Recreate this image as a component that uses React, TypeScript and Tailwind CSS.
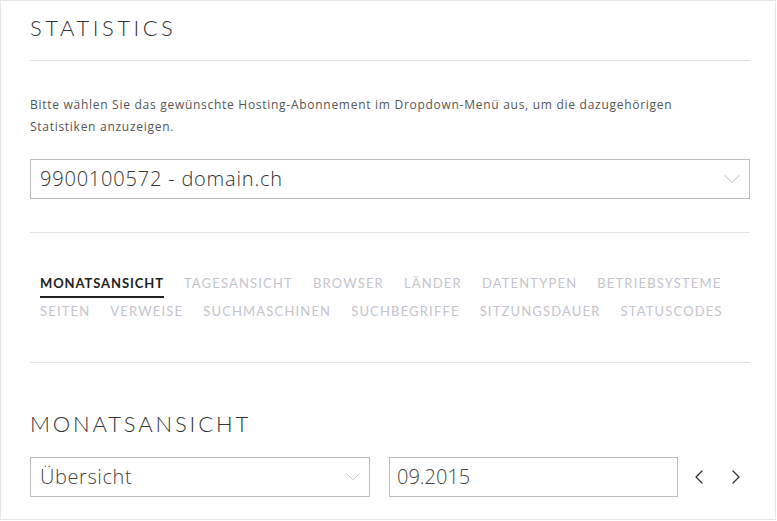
import { ChevronDown, ChevronLeft, ChevronRight } from "lucide-react";

const tabsRow1 = ["Monatsansicht", "Tagesansicht", "Browser", "Länder", "Datentypen", "Betriebsysteme"];
const tabsRow2 = ["Seiten", "Verweise", "Suchmaschinen", "Suchbegriffe", "Sitzungsdauer", "Statuscodes"];

const Tab = ({ label, active }: { label: string; active?: boolean }) => (
  <span
    className={
      active
        ? "border-b-2 border-[#222] pb-[4px] font-bold tracking-[0.07em] text-[#222]"
        : "pb-[6px] text-[#c4c4cc]"
    }
  >
    {label}
  </span>
);

const App = () => {
  return (
    <div
      className="h-[520px] w-[776px] overflow-hidden border border-[#e6e6e6] bg-white pl-[29px] pr-[25px] text-[#444]"
      style={{ fontFamily: "Lato, 'Open Sans', sans-serif" }}
    >
      <h1 className="mt-[13px] text-[22px] font-light uppercase leading-[28px] tracking-[0.16em] text-[#333]">
        Statistics
      </h1>
      <div className="mt-[18px] border-t border-[#e3e3e3]" />

      <p className="mt-[33px] font-['Open_Sans',sans-serif] text-[12px] leading-[22px] tracking-[0.06em] text-[#555]">
        Bitte wählen Sie das gewünschte Hosting-Abonnement im Dropdown-Menü aus, um die dazugehörigen
        <br />
        Statistiken anzuzeigen.
      </p>

      <div className="mt-[21px] flex h-[40px] items-center justify-between border border-[#bdbdbd] pl-[9px] pr-[3px]">
        <span className="font-['Open_Sans',sans-serif] text-[20px] font-light tracking-[0.04em] text-[#333]">
          9900100572 - domain.ch
        </span>
        <ChevronDown className="h-7 w-7 text-[#c8c8c8]" strokeWidth={0.9} />
      </div>

      <div className="mt-[33px] border-t border-[#e3e3e3]" />

      <div className="mt-[41px] flex flex-col gap-[4px] px-[10px] text-[13px] uppercase leading-[18px] tracking-[0.09em]">
        <div className="flex gap-[20px]">
          {tabsRow1.map((t, i) => (
            <Tab key={t} label={t} active={i === 0} />
          ))}
        </div>
        <div className="flex gap-[20px]">
          {tabsRow2.map((t) => (
            <Tab key={t} label={t} />
          ))}
        </div>
      </div>

      <div className="mt-[36px] border-t border-[#e3e3e3]" />

      <h2 className="mt-[47px] text-[22px] font-light uppercase leading-[28px] tracking-[0.13em] text-[#333]">
        Monatsansicht
      </h2>

      <div className="mt-[19px] flex items-center">
        <div className="flex h-[40px] w-[340px] items-center justify-between border border-[#bdbdbd] pl-[9px] pr-[4px]">
          <span className="font-['Open_Sans',sans-serif] text-[20px] font-light tracking-[0.03em] text-[#444]">
            Übersicht
          </span>
          <ChevronDown className="h-6 w-6 text-[#c8c8c8]" strokeWidth={1} />
        </div>
        <div className="ml-[19px] flex h-[40px] w-[289px] items-center border border-[#bdbdbd] pl-[7px]">
          <span className="font-['Open_Sans',sans-serif] text-[20px] font-light text-[#444]">09.2015</span>
        </div>
        <div className="ml-[9px] flex gap-[13px] text-[#333]">
          <ChevronLeft className="h-6 w-6" strokeWidth={1.3} />
          <ChevronRight className="h-6 w-6" strokeWidth={1.3} />
        </div>
      </div>
    </div>
  );
};

export default App;
